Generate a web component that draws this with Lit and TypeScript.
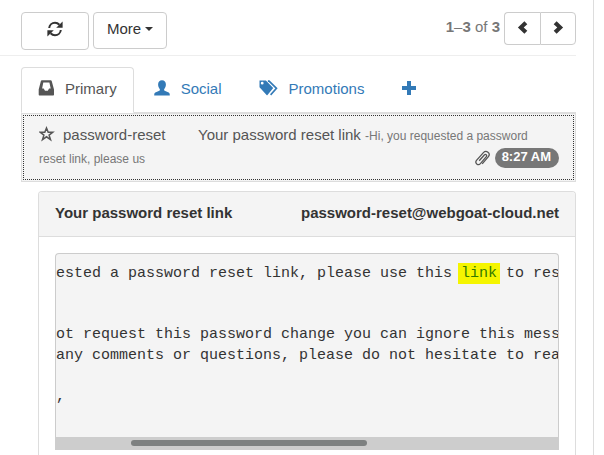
import { LitElement, html, css, svg } from "lit";
import { customElement, state } from "lit/decorators.js";

const icons = {
  refresh: svg`<path d="M2.200 7C2.500 3.900 5 1.800 8 1.800c1.700 0 3.300.8 4.400 2" fill="none" stroke="currentColor" stroke-width="2"/><path d="M15.600.4v6.400H9.200z" fill="currentColor"/><path d="M13.800 9c-.3 3.100-2.800 5.200-5.800 5.200-1.700 0-3.300-.8-4.400-2" fill="none" stroke="currentColor" stroke-width="2"/><path d="M.4 15.600V9.200h6.400z" fill="currentColor"/>`,
  left: svg`<path d="M12.300 4.200 9.400 1.300 2.900 7.500l6.500 6.200 2.900-2.900L8.700 7.500z" fill="currentColor"/>`,
  right: svg`<path d="M3.700 4.200 6.600 1.300 13.100 7.500l-6.500 6.200-2.900-2.900L7.300 7.500z" fill="currentColor"/>`,
  inbox: svg`<path fill-rule="evenodd" fill="currentColor" d="M3.900.3h8.800c.5 0 .9.300 1 .8L16 9.600v4.900c0 .6-.4 1-1 1H1.700c-.6 0-1-.4-1-1V9.600L2.900 1.100c.1-.5.500-.8 1-.8zM5.300 2.400 4.100 8.500h1.600l1.300 2.200h2.800l1.300-2.200h1.600l-1.300-6.100z"/>`,
  user: svg`<path fill="currentColor" d="M8 .3c2.500 0 3.900 1.700 3.900 4.100 0 1.900-.7 3.400-1.600 4.500-.4.500-.2 1.500.4 1.800l3.400 1.500c.9.400 1.500 1 1.600 1.900l.1 1.500H.2l.1-1.500c.1-.9.700-1.500 1.600-1.900l3.400-1.500c.6-.3.800-1.300.4-1.800C4.800 7.800 4.100 6.300 4.100 4.400 4.100 2 5.500.3 8 .3z"/>`,
  tags: svg`<path fill-rule="evenodd" fill="currentColor" d="M.5.500h6.400l7.300 7.600-5.700 6.900c-.3.300-.6.300-.9 0L.5 7.300zM3.200 1.800a1.400 1.400 0 1 0 0 2.800 1.400 1.400 0 0 0 0-2.800z"/><path d="M8.900 1.100h1.200l7.400 7.300-5.900 6.500" fill="none" stroke="currentColor" stroke-width="1.600"/>`,
  plus: svg`<path d="M6 1h4v5h5v4h-5v5H6v-5H1V6h5z" fill="currentColor"/>`,
  star: svg`<path d="M7.500 2 9.200 6.300h4.500l-3.600 2.800 1.400 4.600-4-2.900-4 2.900 1.400-4.600L1.300 6.300h4.500z" fill="none" stroke="currentColor" stroke-width="1.500"/>`,
  clip: svg`<path d="M5.200 10.800 10.300 5c1.400-1.400 3 .2 2 1.700l-5.900 6.900C4.200 16 .2 13.200 2.500 10.300L9.400 2.600c2.900-2.900 7.600.7 5 4.100L8.200 13.900" fill="none" stroke="currentColor" stroke-width="1.300"/>`,
};

const icon = (name: keyof typeof icons, wide = false) =>
  html`<svg class="icon ${wide ? "wide" : ""}" viewBox="0 0 ${wide ? 19 : 16} 16" aria-hidden="true">${icons[name]}</svg>`;

@customElement("app-root")
export class AppRoot extends LitElement {
  static styles = css`
    :host {
      display: block;
      font: 15px/21px "Liberation Sans", Arial, sans-serif;
      color: #333;
      background: #fff;
    }
    * { box-sizing: border-box; }
    a { color: #337ab7; text-decoration: none; }
    button { font: inherit; color: inherit; cursor: pointer; }
    .icon { width: 16px; height: 16px; display: block; flex: none; }
    .wide { width: 19px; }
    .page {
      display: flex;
      flex-direction: column;
      min-height: 100vh;
      margin-right: 10px;
      padding-right: 17px;
      border-right: 1px solid #ddd;
    }
    .toolbar {
      display: flex;
      align-items: flex-start;
      gap: 4px;
      padding: 12px 0 5px 21px;
      border-bottom: 1px solid #eee;
    }
    .btn {
      display: flex;
      align-items: center;
      justify-content: center;
      background: #fff;
      border: 1px solid #ccc;
      border-radius: 4px;
    }
    .reload { padding: 8px 25px 13px; }
    .more { padding: 5px 13px 9px; gap: 4px; }
    .caret {
      border: 4px solid transparent;
      border-top-color: currentColor;
      border-bottom: 0;
    }
    .tall { height: 38px; }
    .pager { display: flex; margin-left: auto; }
    .count { color: #777; padding: 4px 4px 0 0; }
    .step { width: 36px; height: 33px; padding: 0 0 2px; }
    .prev { border-radius: 4px 0 0 4px; border-right: 0; }
    .next { border-radius: 0 4px 4px 0; }
    .tabs {
      display: flex;
      margin: 11px 0 0 21px;
      border-bottom: 1px solid #ddd;
    }
    .tab {
      display: flex;
      gap: 11px;
      padding: 10px 16px 13px;
      border: 1px solid transparent;
      border-radius: 4px 4px 0 0;
      margin: 0 3px -1px 0;
      background: none;
    }
    .tab .icon { margin-top: 2px; }
    .active {
      color: #555;
      border-color: #ddd;
      border-bottom-color: #fff;
      background: #fff;
    }
    .mail {
      display: block;
      margin-left: 21px;
      padding: 10px 18px 12px 17px;
      height: 69px;
      color: #555;
      background: #f4f4f4;
      border: 1px solid #ddd;
      outline: 1px dotted #333;
      outline-offset: -3px;
    }
    .mail .icon { display: inline-block; vertical-align: -2px; }
    .from { display: inline-block; width: 135px; margin-left: 8px; }
    .muted { color: #777; font-size: 12px; }
    .meta { float: right; display: flex; align-items: center; gap: 5px; margin: 1px -2px 0 0; }
    .badge {
      color: #fff;
      background: #777;
      border-radius: 10px;
      padding: 0 8px 2px 7px;
      font-size: 13px;
      font-weight: bold;
      line-height: 18px;
    }
    .panel {
      flex: 1;
      margin: 9px 0 0 38px;
      border: 1px solid #ddd;
      border-bottom: 0;
      border-radius: 4px 4px 0 0;
    }
    .head {
      display: flex;
      justify-content: space-between;
      padding: 10px 16px 13px;
      background: #f4f4f4;
      border-bottom: 1px solid #ddd;
      border-radius: 3px 3px 0 0;
      font-weight: bold;
    }
    .title { margin: 0; font: inherit; }
    .box { margin: 16px 16px 0; }
    .text {
      margin: 0;
      padding: 9px 0 30px;
      overflow: hidden;
      background: #f4f4f4;
      border: 1px solid #ccc;
      border-bottom: 0;
      border-radius: 4px 4px 0 0;
      font: 15px/21px "Liberation Mono", "Courier New", monospace;
      white-space: pre;
    }
    .line { display: block; }
    .gap2 { margin-top: 40px; }
    .gap1 { margin-top: 20px; }
    .mark {
      color: #337a00;
      background: #f5f500;
      padding: 2px 3px;
      margin: 0 -3px;
    }
    .track { background: #cdcdcd; padding: 3px 0 4px; }
    .thumb { height: 6px; border-radius: 3px; background: #7e8181; }
  `;

  @state() private tab = "Primary";

  private renderTab(name: string, glyph: keyof typeof icons) {
    return html`<a href="#" role="tab" class="tab ${this.tab === name ? "active" : ""}"
      @click=${(e: Event) => { e.preventDefault(); this.tab = name; }}
      >${icon(glyph, glyph === "tags")}<span>${name}</span></a>`;
  }

  render() {
    return html`<main class="page">
      <div class="toolbar">
        <button class="btn tall reload" aria-label="Refresh">${icon("refresh")}</button>
        <button class="btn more">More<span class="caret"></span></button>
        <div class="pager">
          <span class="count"><b>1</b>–<b>3</b> of <b>3</b></span>
          <button class="btn step prev" aria-label="Previous">${icon("left")}</button>
          <button class="btn step next" aria-label="Next">${icon("right")}</button>
        </div>
      </div>
      <nav class="tabs" role="tablist">
        ${this.renderTab("Primary", "inbox")}
        ${this.renderTab("Social", "user")}
        ${this.renderTab("Promotions", "tags")}
        <a href="#" class="tab" aria-label="Add tab">${icon("plus")}</a>
      </nav>
      <a href="#" class="mail">${icon("star")}<span class="from">password-reset</span><span>Your password reset link</span>
        <span class="muted">-Hi, you requested a password reset link, please us</span>
        <span class="meta">${icon("clip")}<span class="badge">8:27 AM</span></span></a>
      <section class="panel">
        <header class="head"><h2 class="title">Your password reset link</h2><span>password-reset@webgoat-cloud.net</span></header>
        <div class="box">
          <div class="text"><span class="line">ested a password reset link, please use this <a href="#" class="mark">link</a> to res</span><span class="line gap2">ot request this password change you can ignore this mess</span><span class="line">any comments or questions, please do not hesitate to rea</span><span class="line gap1">,</span></div>
          <div class="track"><div class="thumb" style="width:47%;margin-left:15%"></div></div>
        </div>
      </section>
    </main>`;
  }
}
